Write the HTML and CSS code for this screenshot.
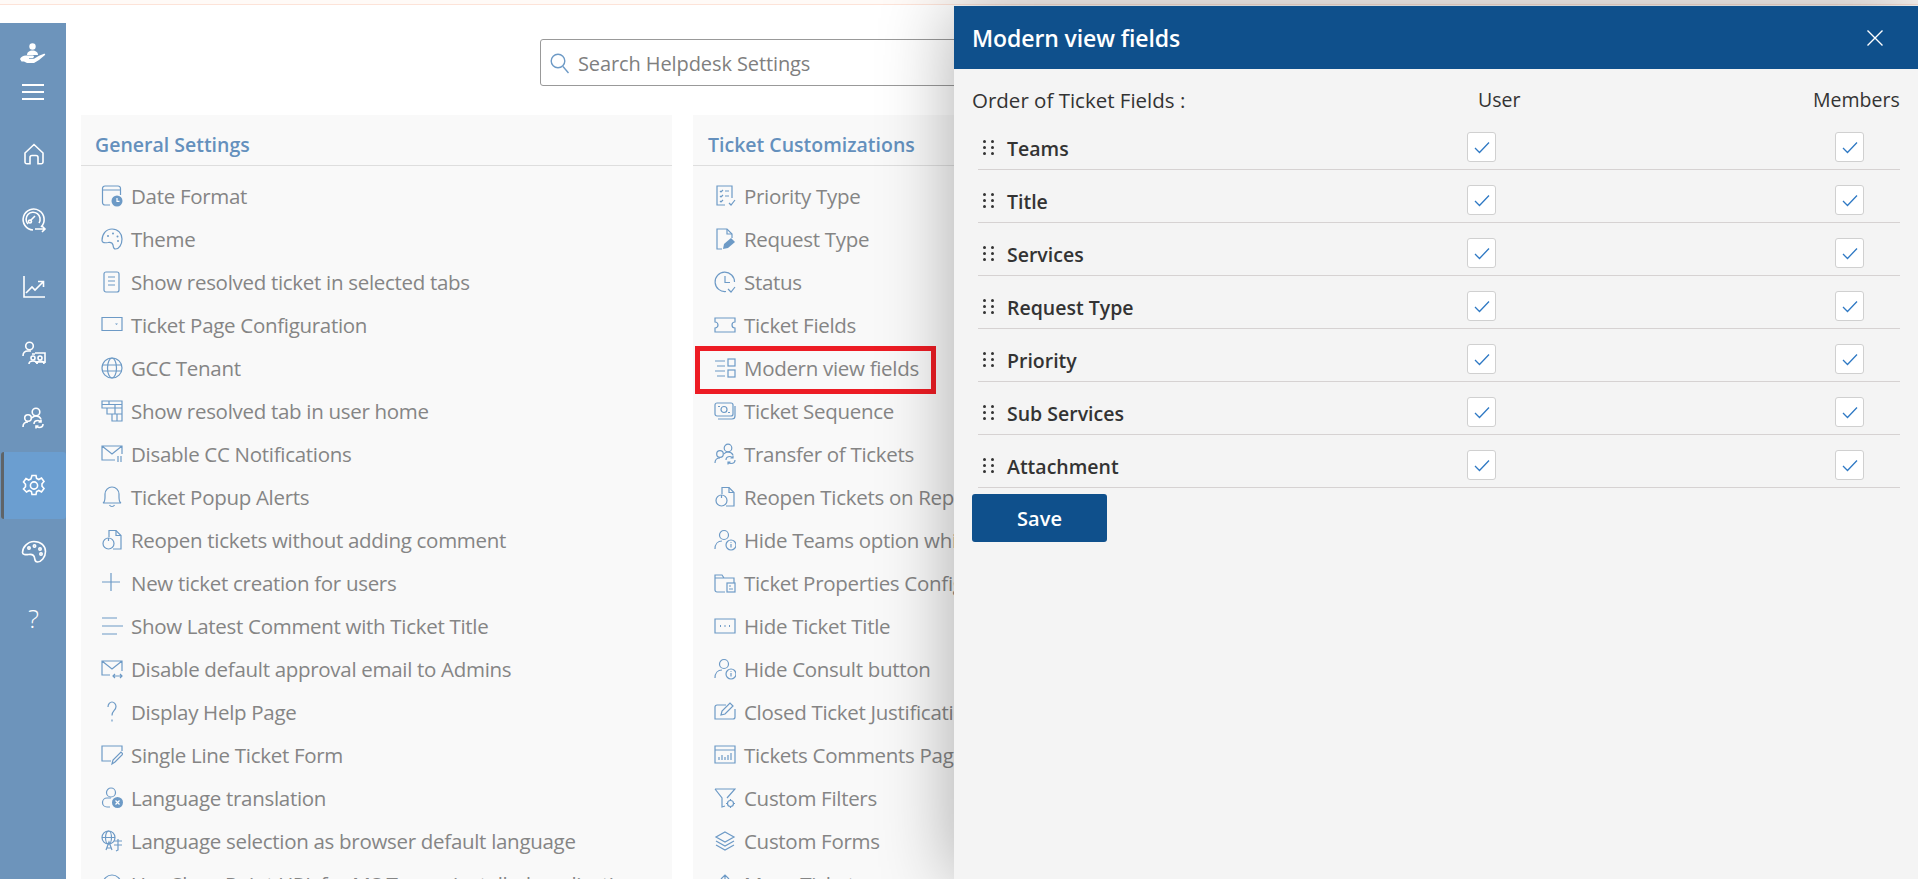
FILE: index.html
```html
<!DOCTYPE html>
<html>
<head>
    <title>Helpdesk Settings</title>
    <link rel="stylesheet" href="styles.css">
</head>
<body>
    <svg class="sprites" width="0" height="0">
        <defs>
            <g id="i-user-info"><circle cx="10" cy="6" r="4.5"/><path d="M1 20c0-5 3-8 7-8"/><circle cx="17" cy="16" r="5"/><path d="M17 15v3.500M17 13v.8"/></g>
            <g id="i-reopen"><path d="M8 8V1.500h7l5 5V20H12"/><path d="M15 1.500v5h5"/><circle cx="7.500" cy="14.500" r="5.500"/><path d="M7.500 9v3"/></g>
            <g id="i-transfer"><circle cx="14" cy="5" r="3.800"/><circle cx="6" cy="11" r="3.300"/><path d="M1 20c0-3 2-5 5-5M10 11c1-1.500 2-2 4-2 2 0 4 1 5 3"/><path d="M12 17c0-2 1.500-3.500 4-3.500 1 0 2 .5 3 1.500M19 12.500V15h-2.500M21 17c0 2-1.500 3.500-4 3.500-1 0-2-.5-3-1.500M14 21.500V19h2.500"/></g>
        </defs>
    </svg>

    <div class="top-strip"></div>

    <div class="page">
        <nav class="sidebar">
            <div class="side-brand">
                <svg width="26" height="20" viewBox="0 0 26 20" fill="#fff"><circle cx="12.500" cy="3.500" r="3.200"/><path d="M7 12c0-3 2.500-4.500 5.500-4.500S18 9 18 12z"/><path d="M0 16c1-2 3-3.500 6-3.500h6c1.500 0 2 .6 2 1.200s-.8 1.300-2 1.300H9v.8h5l5-3 5-2c1 0 1.500.5 1 1.200l-6 5-5 3H7l-3-1.500H1.500z"/></svg>
                <div class="burger"><span></span><span></span><span></span></div>
            </div>
            <a class="side-item"><svg width="24" height="24" viewBox="0 0 24 24"><path d="M3 11 12 2.500 21 11v9a1.800 1.800 0 0 1-1.800 1.800H16V15.500a2 2 0 0 0-2-2h-4a2 2 0 0 0-2 2v6.300H4.800A1.800 1.800 0 0 1 3 20z"/></svg></a>
            <a class="side-item"><svg width="26" height="26" viewBox="0 0 26 26"><path d="M20 20a10.500 10.500 0 1 0-8 3"/><path d="M7 17a7 7 0 1 1 11-1"/><path d="m9 14 5-5"/><circle cx="9" cy="14.500" r="1.500"/><path d="M14 22h10M21 19l3 3-3 3"/></svg></a>
            <a class="side-item"><svg width="22" height="22" viewBox="0 0 22 22"><path d="M1 0v21h21"/><path d="m3 17 6-6 3 3 8-8M15 5.500h5.500V11"/></svg></a>
            <a class="side-item"><svg width="24" height="24" viewBox="0 0 24 24"><circle cx="7.500" cy="5" r="3.800"/><path d="M1 15c0-3 2-5 5-5h3"/><path d="M13 12h10v10M10 13h3M13 21h10"/><circle cx="11" cy="17" r="2"/><circle cx="18" cy="17" r="2"/><path d="M7 23c0-2 2-3 4-3s4 1 4 3M15 23c0-2 1-3 3-3s4 1 4 3"/></svg></a>
            <a class="side-item"><svg width="24" height="24" viewBox="0 0 24 24"><use href="#i-transfer"/></svg></a>
            <a class="side-item active"><svg width="24" height="24" viewBox="0 0 24 24"><path d="M10 1.500h4l.6 3 2.200 1 2.700-1.500 2.500 3.500-2 2.300v2.400l2 2.300-2.500 3.500-2.700-1.500-2.200 1-.6 3h-4l-.6-3-2.200-1-2.700 1.500L1.500 15l2-2.300v-2.400l-2-2.300L4 4.500 6.700 6l2.200-1z"/><circle cx="12" cy="11.500" r="3.600"/></svg></a>
            <a class="side-item"><svg width="26" height="24" viewBox="0 0 26 24"><path d="M13 1.500c7 0 11.500 4.500 11.500 10 0 6-4.500 10.500-8 10.500-3 0-2.500-2.500-3-4.500-.5-2.500-3-3.500-6-3-3 .4-6 .2-6-2 0-5 5-11 11.500-11z"/><circle cx="8" cy="8" r="1.200"/><circle cx="13.500" cy="6" r="1.200"/><circle cx="19" cy="9" r="1.200"/><circle cx="20" cy="14" r="1.200"/></svg></a>
            <a class="side-item side-help">?</a>
        </nav>

        <main class="content">
            <div class="search">
                <svg width="19" height="21" viewBox="0 0 19 21"><circle cx="8" cy="8" r="6.800"/><path d="m13 13.500 5.500 6.500"/></svg>
                <span>Search Helpdesk Settings</span>
            </div>

            <div class="cards">
                <section class="card">
                    <h3>General Settings</h3>
                    <ul>
                        <li><svg viewBox="0 0 22 22"><path d="M9 20H4a2.500 2.500 0 0 1-2.500-2.500v-14A2.500 2.500 0 0 1 4 1h13a2.500 2.500 0 0 1 2.500 2.500V10M1.500 5h18"/><circle class="solid" cx="16" cy="16" r="5.500"/><path class="cut" d="M16 13v3.300h2.500"/></svg>Date Format</li>
                        <li><svg viewBox="0 0 22 22"><path d="M11 1c6 0 10 4.500 10 10 0 5.500-3 10-6.500 10-2.500 0-2-2-2.500-4-.5-2-2.500-3-5-2.500C4 15 1 15 1 12.500 1 6 5 1 11 1z"/><circle class="solid" cx="7" cy="8" r="1"/><circle class="solid" cx="12" cy="5.500" r="1"/><circle class="solid" cx="16.500" cy="8.500" r="1"/><circle class="solid" cx="17" cy="13" r="1"/></svg>Theme</li>
                        <li><svg viewBox="0 0 22 22"><rect x="3" y="1" width="15" height="20" rx="2"/><path d="M7 6h7M7 10h7M7 14h7"/></svg>Show resolved ticket in selected tabs</li>
                        <li><svg viewBox="0 0 22 22"><path d="M1 3.500h20v13H1z"/><path class="solid" d="m14 9.500 3 0-1.500 1.500z"/></svg>Ticket Page Configuration</li>
                        <li><svg viewBox="0 0 22 22"><circle cx="11" cy="11" r="10"/><ellipse cx="11" cy="11" rx="4.500" ry="10"/><path d="M1.500 8h19M1.500 14h19"/></svg>GCC Tenant</li>
                        <li><svg viewBox="0 0 22 22"><path d="M1 1h20v7H1zM1 4.500h20M8 1v3.500M14 4.500V8M6 8v6h15V8M14 8v6M11 14v7h10v-7M16 14v7"/></svg>Show resolved tab in user home</li>
                        <li><svg viewBox="0 0 22 22"><path d="M14 17H1V3h20v8M1 3l10 8 10-8M17 13v6M20 13v6"/></svg>Disable CC Notifications</li>
                        <li><svg viewBox="0 0 22 22"><path d="M2 17c2-1 2-3 2-6V8a7 7 0 0 1 14 0v3c0 3 0 5 2 6z"/><path d="M8.500 19c.5 1 1.500 1.500 2.500 1.500s2-.5 2.500-1.500"/></svg>Ticket Popup Alerts</li>
                        <li><svg viewBox="0 0 22 22"><use href="#i-reopen"/></svg>Reopen tickets without adding comment</li>
                        <li><svg viewBox="0 0 22 22"><path d="M10 1v18M1 10h18"/></svg>New ticket creation for users</li>
                        <li><svg viewBox="0 0 22 22"><path d="M1 3h15M1 11h21M1 19h15"/></svg>Show Latest Comment with Ticket Title</li>
                        <li><svg viewBox="0 0 22 22"><path d="M9 17H1V3h20v10M1 3l10 8 10-8M12 18h9M14 16l-2 2 2 2M19 16l2 2-2 2"/></svg>Disable default approval email to Admins</li>
                        <li><svg viewBox="0 0 22 22"><path d="M7 6c0-3 2-5 4-5s4 2 4 4.500c0 4-4 4-4 9M11 18.500v2"/></svg>Display Help Page</li>
                        <li><svg viewBox="0 0 22 22"><path d="M10 17H1V2h20v5"/><path d="m11 20 1-4 8-8 2 2-8 8z"/></svg>Single Line Ticket Form</li>
                        <li><svg viewBox="0 0 22 22"><circle cx="10" cy="5.500" r="4.500"/><path d="M9 20H6a4.500 4.500 0 0 1 0-9h4"/><circle class="solid" cx="16.500" cy="15.500" r="5.500"/><path class="cut" d="m14.500 13.500 4 4M18.500 13.500l-4 4"/></svg>Language translation</li>
                        <li><svg viewBox="0 0 22 22"><circle cx="7.500" cy="7.500" r="6.500"/><ellipse cx="7.500" cy="7.500" rx="3" ry="6.500"/><path d="M1 7.500h13M5 20l3-8 3 8M6 18h4M13 11h8M17 9v11l-2 1M13 15h8"/></svg>Language selection as browser default language</li>
                        <li><svg viewBox="0 0 22 22"><circle cx="11" cy="11" r="9"/></svg>Use SharePoint URL for MS Teams installed application</li>
                    </ul>
                </section>

                <section class="card">
                    <h3>Ticket Customizations</h3>
                    <ul>
                        <li><svg viewBox="0 0 22 22"><path d="M11 20H3V1h15v12"/><path d="m6 6 1 1 2-2M11 6h4M6 11l1 1 2-2M11 11h4M6 16l1 1 2-2M15 18l2 2 4-5"/></svg>Priority Type</li>
                        <li><svg viewBox="0 0 22 22"><path d="M8 21H3V1h10l5 5v4"/><path d="M13 1v5h5"/><path class="solid" d="m9 21 1-5 7-6 4 4-7 6z"/></svg>Request Type</li>
                        <li><svg viewBox="0 0 22 22"><path d="M12 20.500A9.700 9.700 0 1 1 20.500 11"/><path d="M11 5v6.500h5M14 18l3 3 4-5"/></svg>Status</li>
                        <li><svg viewBox="0 0 22 22"><path d="M1 4h20v4a3 3 0 0 0 0 6v4H1v-4a3 3 0 0 0 0-6z"/></svg>Ticket Fields</li>
                        <li class="marked"><svg viewBox="0 0 22 22"><path d="M1 4h10M3 9h8M1 14h10M3 19h8"/><rect x="14" y="2" width="7" height="7"/><rect x="14" y="13" width="7" height="7"/></svg>Modern view fields</li>
                        <li><svg viewBox="0 0 22 22"><rect x="1" y="3" width="18" height="13" rx="2"/><circle cx="10" cy="9.500" r="3"/><path d="M4 6.500h2M14 12.500h2M21 6v10a3 3 0 0 1-3 3H4"/></svg>Ticket Sequence</li>
                        <li><svg viewBox="0 0 22 22"><use href="#i-transfer"/></svg>Transfer of Tickets</li>
                        <li><svg viewBox="0 0 22 22"><use href="#i-reopen"/></svg>Reopen Tickets on Reply</li>
                        <li><svg viewBox="0 0 22 22"><use href="#i-user-info"/></svg>Hide Teams option while creating</li>
                        <li><svg viewBox="0 0 22 22"><path d="M11 20H3a2 2 0 0 1-2-2V3h7l2 3h10v5M1 6h9"/><rect x="13" y="11" width="8" height="9"/><path d="M15 14h2M15 17h4"/></svg>Ticket Properties Configuration</li>
                        <li><svg viewBox="0 0 22 22"><path d="M1 4h20v14H1z"/><path class="dots" d="M6 11h1M10.500 11h1M15 11h1"/></svg>Hide Ticket Title</li>
                        <li><svg viewBox="0 0 22 22"><use href="#i-user-info"/></svg>Hide Consult button</li>
                        <li><svg viewBox="0 0 22 22"><path d="M12 4H3a2 2 0 0 0-2 2v12h18a2 2 0 0 0 2-2V8"/><path d="m7 14 1-4 8-8 3 3-8 8z"/></svg>Closed Ticket Justification</li>
                        <li><svg viewBox="0 0 22 22"><path d="M1 2h20v17H1zM1 6h20M5 16v-3M8 16v-5M11 16v-3M14 16v-5M17 16V9"/></svg>Tickets Comments Page</li>
                        <li><svg viewBox="0 0 22 22"><path d="M1 2h20l-8 9M1 2l7 9v9l3-1"/><circle cx="16.500" cy="16.500" r="3"/><path d="M16.500 12v1.500M16.500 19.500V21M12 16.500h1.500M19.500 16.500H21"/></svg>Custom Filters</li>
                        <li><svg viewBox="0 0 22 22"><path d="m11 2 9 5-9 5-9-5zM2 11l9 5 9-5M2 15l9 5 9-5"/></svg>Custom Forms</li>
                        <li><svg viewBox="0 0 22 22"><path d="M11 12V2M7 6l4-4 4 4M2 14h18"/></svg>Move Tickets</li>
                    </ul>
                </section>
            </div>
        </main>
    </div>

    <aside class="panel">
        <header class="panel-head">
            <h2>Modern view fields</h2>
            <svg width="16" height="16" viewBox="0 0 16 16"><path d="M.5.500l15 15M15.500.500l-15 15"/></svg>
        </header>
        <div class="panel-body">
            <div class="field-head">
                <span class="field-label">Order of Ticket Fields :</span>
                <span class="col-user">User</span>
                <span class="col-members">Members</span>
            </div>
            <div id="field_rows"></div>
            <button class="save" type="button">Save</button>
        </div>
    </aside>

    <script>
        // rows of the panel
        const fields = ['Teams', 'Title', 'Services', 'Request Type', 'Priority', 'Sub Services', 'Attachment'];
        const tick = '<span class="check"><svg width="16" height="13" viewBox="0 0 16 13"><path d="M1 7l4.500 4.500L15 1.500"/></svg></span>';
        const rows = document.getElementById('field_rows');

        fields.forEach(name => {
            const row = document.createElement('div');
            row.className = 'field-row';
            row.innerHTML = `<span class="grip"><i></i><i></i><i></i><i></i><i></i><i></i></span>
                <span class="field-name">${name}</span>${tick}${tick}`;
            rows.appendChild(row);
        });
    </script>
</body>
</html>
```
FILE: styles.css
```css
body {
    font-family: "Open Sans", "Noto Sans", sans-serif;
    margin: 0;
    background: #fff;
    overflow: hidden;
    height: 879px;
    position: relative;
}

.sprites {
    position: absolute;
}

.top-strip {
    height: 4px;
    background: #fffaf7;
    border-bottom: 1px solid #fde3d8;
}

.page {
    display: flex;
    margin-top: 18px;
    height: 856px;
}

/* left rail */
.sidebar {
    width: 66px;
    flex: none;
    background: #6d94bb;
    display: flex;
    flex-direction: column;
    align-items: stretch;
}

.side-brand {
    display: flex;
    flex-direction: column;
    align-items: center;
    gap: 21px;
    padding-top: 20px;
    height: 98px;
    box-sizing: border-box;
}

.burger {
    display: flex;
    flex-direction: column;
    gap: 5.5px;
    width: 22px;
}

.burger span {
    height: 1.5px;
    background: #fff;
}

.side-item {
    height: 66.3px;
    flex: none;
    margin-left: 1px;
    border-left: 3px solid transparent;
    border-radius: 3px;
    display: flex;
    align-items: center;
    justify-content: center;
    padding-right: 3px;
    color: #fff;
}

.side-item svg {
    fill: none;
    stroke: #fff;
    stroke-width: 1.6;
}

.side-item.active {
    background: #6b9ed0;
    border-left-color: #5f6468;
}

.side-help {
    font-size: 26px;
    font-weight: 300;
}

/* settings */
.content {
    flex: 1;
    padding: 16px 15px 0;
    min-width: 0;
}

.search {
    width: 840px;
    height: 47px;
    margin-left: 459px;
    box-sizing: border-box;
    border: 1px solid #999;
    border-radius: 3px;
    display: flex;
    align-items: center;
    gap: 9px;
    padding: 2px 0 0 9px;
    font-size: 20px;
    letter-spacing: -0.1px;
    color: #7f7f7f;
}

.search svg {
    fill: none;
    stroke: #6d9ac6;
    stroke-width: 1.4;
}

.cards {
    display: flex;
    gap: 21px;
    margin-top: 29px;
    align-items: flex-start;
}

.card {
    width: 591px;
    flex: none;
    background: #f9f9f9;
}

.card h3 {
    margin: 0;
    height: 50px;
    line-height: 60px;
    padding-left: 14px;
    font-size: 19.5px;
    font-weight: 600;
    color: #6490bd;
    border-bottom: 1px solid #dedede;
}

.card + .card h3 {
    padding-left: 15px;
}

.card ul {
    list-style: none;
    margin: 0;
    padding: 8px 0 0;
}

.card li {
    height: 43.06px;
    display: flex;
    align-items: center;
    gap: 8px;
    padding-left: 20px;
    font-size: 20.5px;
    letter-spacing: -0.3px;
    color: #858585;
    white-space: nowrap;
    position: relative;
}

.card + .card li {
    padding-left: 21px;
}

.card li svg {
    width: 22px;
    height: 22px;
    flex: none;
    fill: none;
    stroke: #6d9ac6;
    stroke-width: 1.2;
}

.card li .solid {
    fill: #6d9ac6;
    stroke: none;
}

.card li .cut {
    stroke: #fff;
}

.card li .dots {
    stroke-width: 2;
}

.card li.marked::after {
    content: "";
    position: absolute;
    left: 2px;
    top: 0;
    width: 231px;
    height: 38px;
    border: 5px solid #ed1c24;
}

/* slide-in panel */
.panel {
    position: absolute;
    left: 954px;
    top: 6px;
    width: 964px;
    height: 873px;
    background: #f4f4f4;
    box-shadow: 0 0 70px rgba(0, 0, 0, 0.32);
}

.panel-head {
    height: 63px;
    background: #0f508c;
    display: flex;
    align-items: center;
    justify-content: space-between;
    padding: 0 35px 0 18px;
}

.panel-head h2 {
    margin: 0;
    font-size: 23px;
    font-weight: 600;
    letter-spacing: -0.1px;
    color: #fff;
}

.panel-head svg {
    stroke: #fff;
    stroke-width: 1.4;
}

.panel-body {
    padding: 0 18px;
}

.field-head {
    display: flex;
    height: 48px;
    padding-top: 13px;
    box-sizing: border-box;
    align-items: center;
    font-size: 19.5px;
    font-weight: 500;
    color: #333;
    white-space: nowrap;
}

.field-label {
    width: 506px;
    font-size: 20.5px;
}

.col-user {
    width: 335px;
}

#field_rows {
    margin-left: 6px;
}

.field-row {
    height: 44px;
    padding-top: 8px;
    border-bottom: 1px solid #d6d2d2;
    display: flex;
    align-items: center;
    color: #333;
    font-size: 19.5px;
    font-weight: 600;
}

.grip {
    display: grid;
    grid-template-columns: 3px 3px;
    column-gap: 5px;
    row-gap: 3px;
    margin: 0 13px 0 5px;
}

.grip i {
    width: 3px;
    height: 3px;
    border-radius: 50%;
    background: #333;
}

.field-name {
    width: 460px;
    padding-top: 2px;
}

.check {
    width: 29px;
    height: 30px;
    box-sizing: border-box;
    background: #fff;
    border: 1px solid #d0d0d0;
    border-radius: 3px;
    display: flex;
    align-items: center;
    justify-content: center;
}

.check + .check {
    margin-left: 339px;
}

.check svg {
    fill: none;
    stroke: #2f79c4;
    stroke-width: 1.3;
}

.save {
    display: block;
    width: 135px;
    height: 48px;
    margin-top: 6px;
    background: #0f508c;
    border: 0;
    border-radius: 3px;
    color: #fff;
    font-family: inherit;
    font-size: 20px;
    font-weight: 600;
}
```
